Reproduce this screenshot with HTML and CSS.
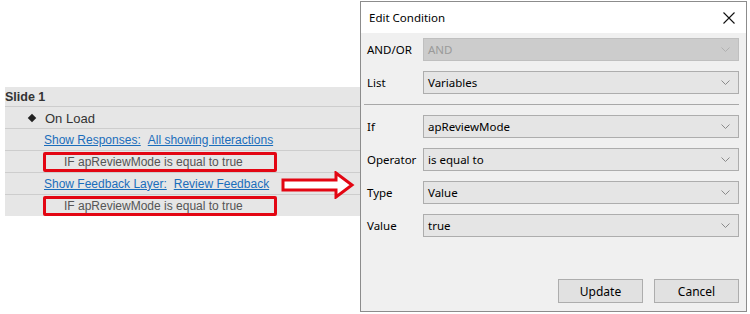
FILE: index.html
```html
<!DOCTYPE html>
<html lang="en">
<head>
  <meta charset="UTF-8" />
  <title>Edit Condition</title>
  <link rel="stylesheet" href="styles.css">
</head>
<body>
  <div class="page">
    <div class="tree">
      <div class="row slide">Slide 1</div>
      <div class="row event"><span class="bullet"></span>On Load</div>
      <div class="row action"><a href="#">Show Responses:</a><a href="#">All showing interactions</a></div>
      <div class="row cond"><div class="cond-box">IF apReviewMode is equal to true</div></div>
      <div class="row action"><a href="#">Show Feedback Layer:</a><a href="#">Review Feedback</a></div>
      <div class="row cond last"><div class="cond-box">IF apReviewMode is equal to true</div></div>
    </div>

    <svg class="arrow" width="74" height="28" viewBox="0 0 74 28">
      <polygon points="2,9 55,9 55,2 71,14 55,26 55,19 2,19" fill="#fff" stroke="#e30613" stroke-width="3" />
    </svg>

    <div class="dialog">
      <div class="title-bar">
        <span>Edit Condition</span>
        <svg class="close" width="12" height="12" viewBox="0 0 12 12">
          <path d="M0.5 0.5 L11.5 11.5 M11.5 0.5 L0.5 11.5" stroke="#111" stroke-width="1.1" fill="none" />
        </svg>
      </div>
      <div class="dialog-body">
        <div class="field">
          <label>AND/OR</label>
          <div class="select disabled"><span>AND</span><svg class="chev" width="9" height="5" viewBox="0 0 9 5"><path d="M0.5 0.5 L4.5 4.5 L8.5 0.5" /></svg></div>
        </div>
        <div class="field">
          <label>List</label>
          <div class="select"><span>Variables</span><svg class="chev" width="9" height="5" viewBox="0 0 9 5"><path d="M0.5 0.5 L4.5 4.5 L8.5 0.5" /></svg></div>
        </div>
        <div class="separator"></div>
        <div class="field">
          <label>If</label>
          <div class="select"><span>apReviewMode</span><svg class="chev" width="9" height="5" viewBox="0 0 9 5"><path d="M0.5 0.5 L4.5 4.5 L8.5 0.5" /></svg></div>
        </div>
        <div class="field">
          <label>Operator</label>
          <div class="select"><span>is equal to</span><svg class="chev" width="9" height="5" viewBox="0 0 9 5"><path d="M0.5 0.5 L4.5 4.5 L8.5 0.5" /></svg></div>
        </div>
        <div class="field">
          <label>Type</label>
          <div class="select"><span>Value</span><svg class="chev" width="9" height="5" viewBox="0 0 9 5"><path d="M0.5 0.5 L4.5 4.5 L8.5 0.5" /></svg></div>
        </div>
        <div class="field">
          <label>Value</label>
          <div class="select"><span>true</span><svg class="chev" width="9" height="5" viewBox="0 0 9 5"><path d="M0.5 0.5 L4.5 4.5 L8.5 0.5" /></svg></div>
        </div>
        <div class="buttons">
          <button>Update</button>
          <button>Cancel</button>
        </div>
      </div>
    </div>
  </div>
</body>
</html>
```

FILE: styles.css
```css
body { margin: 0; background: #fff; font-family: "Liberation Sans", Arial, sans-serif; }
.page { position: relative; display: flex; width: 750px; height: 314px; }

.tree { margin: 87px 0 0 5px; width: 355px; background: #e6e6e6; align-self: flex-start; }
.row { height: 21px; border-bottom: 1px solid #cdcdcd; display: flex; align-items: center; font-size: 12px; color: #333; }
.row.slide { height: 19px; font-weight: bold; font-size: 12.5px; }
.row.event { font-size: 13px; padding-left: 23px; padding-top: 1px; height: 20px; }
.row.last { border-bottom: none; }
.bullet { width: 6px; height: 6px; background: #222; transform: rotate(45deg); margin: 0 10px 0 1px; }
.row.action { padding-left: 39px; }
.row.action a { color: #1a6dbb; text-decoration: underline; margin-right: 7px; }
.row.cond { padding-left: 38px; align-items: flex-end; }
.cond-box { box-sizing: border-box; width: 234px; height: 20px; border: 3px solid #e30613; border-radius: 2px; padding-left: 18px; display: flex; align-items: center; color: #555; font-size: 12px; }

.arrow { position: absolute; left: 281px; top: 171px; }

.dialog { box-sizing: border-box; margin-top: 1px; width: 387px; height: 311px; border: 1px solid #8c8c8c; background: #f0f0f0; font-family: "Noto Sans", "Open Sans", sans-serif; font-size: 11.5px; color: #000; display: flex; flex-direction: column; }
.title-bar { height: 31px; background: #fff; display: flex; align-items: center; justify-content: space-between; padding: 0 11px 0 8px; }
.close { display: block; }
.dialog-body { flex: 1; padding: 5px 7px 0 6px; display: flex; flex-direction: column; }
.field { display: flex; align-items: center; height: 23px; margin-bottom: 10px; }
.field label { width: 56px; }
.select { box-sizing: border-box; flex: 1; height: 23px; background: #e5e5e5; border: 1px solid #adadad; display: flex; align-items: center; justify-content: space-between; padding: 0 8px 0 4px; }
.select.disabled { background: #cccccc; border-color: #bfbfbf; color: #9a9a9a; }
.chev { fill: none; stroke: #8a8a8a; stroke-width: 1; }
.select.disabled .chev { stroke: #b0b0b0; }
.separator { height: 1px; background: #a8a8a8; margin: 0 0 10px -3px; }
.buttons { margin-top: auto; margin-bottom: 8px; display: flex; justify-content: flex-end; gap: 11px; }
.buttons button { width: 85px; height: 24px; background: #e1e1e1; border: 1px solid #adadad; font-family: inherit; font-size: 12px; color: #000; padding: 0; }
```
